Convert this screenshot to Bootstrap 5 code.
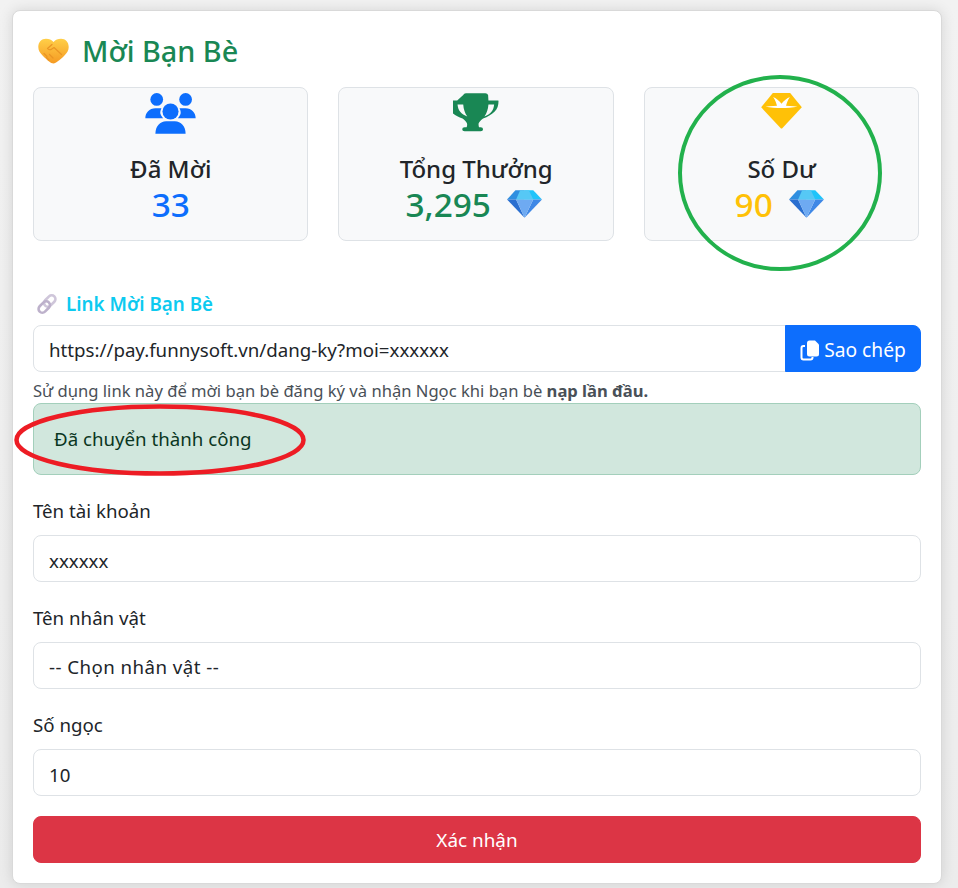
<!DOCTYPE html>
<html lang="vi">
<head>
<meta charset="utf-8">
<title>Mời Bạn Bè</title>
<link rel="stylesheet" href="https://cdn.jsdelivr.net/npm/bootstrap@5.3.0/dist/css/bootstrap.min.css">
<style>
html,body{height:100%;overflow:hidden}
body{font-family:"Noto Sans","Open Sans",sans-serif;background:linear-gradient(#f2f2f2,#ececec);color:#212529;position:relative;font-size:17px}
.shell{margin:10px 16px 0 12px;height:874px;padding:16px 20px 20px;border-color:#d9d9d9;border-radius:8px;box-shadow:0 0 14px rgba(0,0,0,.12)}
.ttl{font-size:28.800px;font-weight:500;line-height:48px;height:48px;margin:0 0 12px;color:#198754;gap:13px}
.stats{--bs-gutter-x:30px;margin-right:-13.400px;margin-bottom:51px}
.stat{height:154px;background:#f8f9fa;border:1px solid #dee2e6;border-radius:8px;padding-top:5px;text-align:center}
.stat svg.ic{display:block;margin:0 auto}
.stat-icon{height:48px;display:flex;justify-content:center;align-items:flex-start}
.stat-name{font-size:24px;font-weight:500;line-height:31px;margin-top:12px}
.stat-num{font-size:33.400px;font-weight:500;line-height:40px;display:flex;justify-content:center;align-items:center;gap:16px}
.gem{margin-right:5px}
.lnk{font-size:18.800px;font-weight:600;line-height:24px;color:#0dcaf0;gap:7px;margin-bottom:9px}
.lnk svg{margin-left:2px}
.fc{height:47px;font-size:18.700px;padding:9.500px 15px 7px;color:#212529;border-color:#dee2e6;border-radius:8px}
.copy{font-size:19.200px;width:136px;padding:3px 0 0;display:flex;align-items:center;justify-content:center;gap:4px;border-radius:0 8px 8px 0!important}
.hint{font-size:16.600px;line-height:20px;color:#495057;margin-top:9px;height:22px}
.okbox{height:73px;margin:0 0 24px;padding:0 20px;display:flex;align-items:center;font-size:18.700px;border-radius:8px;color:#0a3622}
.lab{font-size:18.700px;line-height:24px;margin:0 0 12px;display:block}
.grp{margin-bottom:24px}
.grp-last{margin-bottom:20px}
select.fc{appearance:none;background-image:none;letter-spacing:.45px}
.send{height:47px;font-size:18.900px;padding:2px 0 0;border-radius:8px}
.marks{position:absolute;left:0;top:0;pointer-events:none}
</style>
</head>
<body>
<div class="card shell">
  <h2 class="ttl d-flex align-items-center">
    <svg width="31" height="26" viewBox="0 0 31 26" class="flex-shrink-0" style="margin-left:5px" aria-hidden="true">
      <defs><linearGradient id="hs" x1="0" y1="0" x2="0" y2="1"><stop offset="0" stop-color="#ffcf48"/><stop offset="1" stop-color="#f59a23"/></linearGradient></defs>
      <path d="M15.500 25.500C13 25.500 9 22 5 18 2 15 .3 12.500.3 9 .3 4 3.500.8 8 .8c3.200 0 5.500 1.200 7.500 3.200 2-2 4.300-3.200 7.500-3.200 4.500 0 7.700 3.200 7.700 8.200 0 3.500-1.700 6-4.700 9-4 4-8 7-10.500 7.500z" fill="url(#hs)"/>
      <path d="M14 6.500l-4.500 4c1 1.500 3 1.500 4 .7l2.500-1.700 7.500 7M8.500 19.500l2.500 2.500M11.500 16.500l3.500 3.500M6 15.500l3 3" fill="none" stroke="#ea9524" stroke-width="1.200" stroke-linecap="round" stroke-linejoin="round"/>
    </svg>
    <span>Mời Bạn Bè</span>
  </h2>

  <div class="row stats">
    <div class="col-4"><div class="stat">
      <div class="stat-icon"><svg class="ic" width="51" height="41" viewBox="436 278 152 122" aria-hidden="true"><g fill="#0d6efd">
        <circle cx="471" cy="297" r="19"/><circle cx="557" cy="297" r="19"/><circle cx="512" cy="333" r="24"/>
        <path d="M437 353c0-17 12-30 30-30h18c-3 6-4 12-3 17 2 5 4 9 8 13z"/><path d="M587 353c0-17-12-30-30-30h-18c3 6 4 12 3 17-2 5-4 9-8 13z"/>
        <path d="M467 399c0-22 14-37 32-37h26c18 0 32 15 32 37z"/></g></svg></div>
      <div class="stat-name">Đã Mời</div>
      <div class="stat-num text-primary">33</div>
    </div></div>
    <div class="col-4"><div class="stat">
      <div class="stat-icon"><svg class="ic" width="46" height="41" viewBox="372 68 136 122" aria-hidden="true"><path fill="#198754" fill-rule="evenodd" d="M402 74q2-5 8-5h58q6 0 8 5l1 16h29q1 0 1 2c0 12-3 24-12 32-9 9-20 15-34 20-5 4-11 9-13 14-1 4 0 9 1 12h5q7 0 7 6t-7 6h-48q-7 0-7-6t7-6h6c2-5 2-9 1-12-2-5-8-10-13-14-14-5-25-11-34-20-9-8-12-20-12-32q0-2 1-2h29zM385 102h17c1 14 5 26 12 36-9-3-16-8-21-14-5-6-7-14-8-22zM494 102h-17c-1 14-5 26-12 36 9-3 16-8 21-14 5-6 7-14 8-22z"/></svg></div>
      <div class="stat-name">Tổng Thưởng</div>
      <div class="stat-num text-success">3,295
        <svg class="gem" width="35" height="28" viewBox="532 378 104 81" aria-hidden="true">
          <path d="M532 405l25-27h27v27z" fill="#2f8fe0"/><path d="M584 378h26l26 27h-52z" fill="#1fc4fa"/>
          <path d="M532 405h27l25 54z" fill="#2a6fd0"/><path d="M636 405h-26l-26 54z" fill="#3f88e6"/>
          <path d="M559 405h51l-26 54z" fill="#6eaaf2"/><path d="M559 405l12-27h26l13 27z" fill="#56c8f5"/>
        </svg></div>
    </div></div>
    <div class="col-4"><div class="stat">
      <div class="stat-icon"><svg class="ic" width="41" height="36" viewBox="306 105 122 108" aria-hidden="true">
        <path d="M341 105h52l35 43-58 62q-3 3-6 0l-58-62z" fill="#ffc107"/>
        <path d="M319 146c30-4 66-4 96 0-30 5-66 5-96 0z" fill="#fff"/>
        <path d="M342 117c10 5 19 12 25 20 6-8 15-15 25-20-6 9-10 20-12 29h-26c-2-9-6-20-12-29z" fill="#fff"/>
      </svg></div>
      <div class="stat-name">Số Dư</div>
      <div class="stat-num text-warning">90
        <svg class="gem" width="35" height="28" viewBox="532 378 104 81" aria-hidden="true">
          <path d="M532 405l25-27h27v27z" fill="#2f8fe0"/><path d="M584 378h26l26 27h-52z" fill="#1fc4fa"/>
          <path d="M532 405h27l25 54z" fill="#2a6fd0"/><path d="M636 405h-26l-26 54z" fill="#3f88e6"/>
          <path d="M559 405h51l-26 54z" fill="#6eaaf2"/><path d="M559 405l12-27h26l13 27z" fill="#56c8f5"/>
        </svg></div>
    </div></div>
  </div>

  <div class="lnk d-flex align-items-center">
    <svg width="24" height="24" viewBox="0 0 24 24" aria-hidden="true"><g fill="none" stroke-width="2.600">
      <rect x="11" y="2.500" width="7.500" height="13" rx="3.750" transform="rotate(45 14.750 9)" stroke="#cfc6da"/>
      <rect x="5.500" y="8.500" width="7.500" height="13" rx="3.750" transform="rotate(45 9.250 15)" stroke="#bdb1cb"/></g></svg>
    <span>Link Mời Bạn Bè</span>
  </div>
  <div class="input-group">
    <input class="form-control fc" type="text" value="https://pay.funnysoft.vn/dang-ky?moi=xxxxxx" readonly>
    <button class="btn btn-primary copy" type="button">
      <svg width="20" height="21" viewBox="0 0 20 21" aria-hidden="true"><path fill="#fff" d="M7 3q0-2.500 2.500-2.500H15l4 4V14q0 2.500-2.500 2.500h-7Q7 16.500 7 14z"/><path fill="none" stroke="#fff" stroke-width="2" d="M5 6H3.500Q1.500 6 1.500 8v9.500q0 2 2 2h7q2 0 2-2V17"/></svg>
      <span>Sao chép</span>
    </button>
  </div>
  <div class="hint">Sử dụng link này để mời bạn bè đăng ký và nhận Ngọc khi bạn bè <strong>nạp lần đầu.</strong></div>
  <div class="alert alert-success okbox" role="alert">Đã chuyển thành công</div>

  <div class="grp"><label class="lab" for="f1">Tên tài khoản</label><input id="f1" class="form-control fc" type="text" value="xxxxxx"></div>
  <div class="grp"><label class="lab" for="f2">Tên nhân vật</label><select id="f2" class="form-control fc"><option>-- Chọn nhân vật --</option></select></div>
  <div class="grp-last"><label class="lab" for="f3">Số ngọc</label><input id="f3" class="form-control fc" type="text" value="10"></div>
  <button class="btn btn-danger w-100 send" type="button">Xác nhận</button>
</div>
<svg class="marks" width="958" height="888" viewBox="0 0 958 888" aria-hidden="true">
  <ellipse cx="780" cy="173" rx="100" ry="96" fill="none" stroke="#22b14c" stroke-width="4"/>
  <ellipse cx="160" cy="440" rx="143.500" ry="33.500" fill="none" stroke="#ed1c24" stroke-width="4.500"/>
</svg>
<script src="https://cdn.jsdelivr.net/npm/bootstrap@5.3.0/dist/js/bootstrap.bundle.min.js"></script>
</body>
</html>
